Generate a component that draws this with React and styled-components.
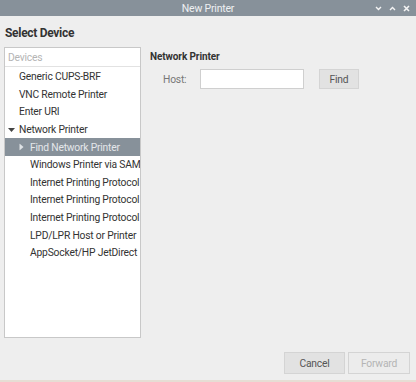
import React from "react";
import styled, { createGlobalStyle } from "styled-components";

const Global = createGlobalStyle`
  html, body { margin: 0; padding: 0; }
  body { background: #eeeeee; font-family: Roboto, "Liberation Sans", sans-serif; }
`;

const Window = styled.div`
  width: 416px;
  height: 382px;
  display: flex;
  flex-direction: column;
  background: #eeeeee;
  box-sizing: border-box;
  border-bottom: 2px solid #e6ddd4;
`;

const TitleBar = styled.div`
  height: 16px;
  background: #87919a;
  display: flex;
  align-items: center;
  justify-content: center;
  position: relative;
  color: #eef0f2;
  font-size: 10.5px;
  letter-spacing: -0.2px;
  flex-shrink: 0;
`;

const Controls = styled.div`
  position: absolute;
  right: 6px;
  top: 0;
  height: 16px;
  display: flex;
  align-items: center;
  gap: 7px;
`;

const Heading = styled.div`
  font-weight: bold;
  font-size: 12px;
  letter-spacing: -0.3px;
  color: #333;
  padding: 10px 0 0 5px;
  height: 21px;
`;

const Body = styled.div`
  display: flex;
  flex: 1;
  padding: 0 0 0 4px;
`;

const List = styled.div`
  width: 137px;
  height: 291px;
  box-sizing: border-box;
  border: 1px solid #c8c8c8;
  background: #fff;
  display: flex;
  flex-direction: column;
  overflow: hidden;
`;

const ListHeader = styled.div`
  height: 18px;
  border-bottom: 1px solid #e2e2e2;
  color: #b4b4b4;
  font-size: 10.3px;
  letter-spacing: -0.2px;
  display: flex;
  align-items: center;
  padding-left: 3px;
  margin-bottom: 1px;
`;

const Row = styled.div`
  height: 17.6px;
  display: flex;
  align-items: center;
  font-size: 10.3px;
  letter-spacing: -0.2px;
  white-space: nowrap;
  color: ${(p) => (p.$selected ? "#e4e7ea" : "#333")};
  background: ${(p) => (p.$selected ? "#87919a" : "transparent")};
  padding-left: ${(p) => 14 + p.$level * 11}px;
  position: relative;
`;

const Arrow = styled.span`
  position: absolute;
  left: ${(p) => 3 + p.$level * 11}px;
  top: 50%;
  transform: translateY(-50%);
  display: flex;
`;

const Right = styled.div`
  flex: 1;
  padding: 2px 0 0 9px;
  display: flex;
  flex-direction: column;
`;

const SubHeading = styled.div`
  font-weight: bold;
  font-size: 10px;
  letter-spacing: -0.1px;
  color: #333;
  height: 20px;
  display: flex;
  align-items: flex-start;
  padding-top: 2px;
  box-sizing: border-box;
`;

const HostRow = styled.div`
  display: flex;
  align-items: center;
  padding-left: 13px;
`;

const Label = styled.span`
  font-size: 10.3px;
  letter-spacing: -0.2px;
  color: #777;
  width: 37px;
`;

const Input = styled.div`
  width: 104px;
  height: 20px;
  box-sizing: border-box;
  border: 1px solid #cfcfcf;
  background: #fff;
  margin-right: 15px;
`;

const Button = styled.div`
  height: ${(p) => p.$h || 20}px;
  width: ${(p) => p.$w}px;
  box-sizing: border-box;
  border: 1px solid #d4d4d4;
  background: ${(p) => (p.$disabled ? "#ececec" : "#e2e2e2")};
  color: ${(p) => (p.$disabled ? "#b4b4b4" : "#555")};
  font-size: 10.3px;
  letter-spacing: -0.2px;
  display: flex;
  align-items: center;
  justify-content: center;
`;

const Footer = styled.div`
  display: flex;
  justify-content: flex-end;
  gap: 3px;
  padding: 0 6px 6px 0;
  flex-shrink: 0;
`;

const Down = ({ color }) => (
  <svg width="7" height="5" viewBox="0 0 7 5"><path d="M0 0.5 L7 0.5 L3.5 4.5 Z" fill={color} /></svg>
);
const RightTri = ({ color }) => (
  <svg width="5" height="7" viewBox="0 0 5 7"><path d="M0.5 0 L4.5 3.5 L0.5 7 Z" fill={color} /></svg>
);

const items = [
  { label: "Generic CUPS-BRF", level: 0 },
  { label: "VNC Remote Printer", level: 0 },
  { label: "Enter URI", level: 0 },
  { label: "Network Printer", level: 0, arrow: "down" },
  { label: "Find Network Printer", level: 1, arrow: "right", selected: true },
  { label: "Windows Printer via SAMBA", level: 1 },
  { label: "Internet Printing Protocol (ipp)", level: 1 },
  { label: "Internet Printing Protocol (https)", level: 1 },
  { label: "Internet Printing Protocol (http)", level: 1 },
  { label: "LPD/LPR Host or Printer", level: 1 },
  { label: "AppSocket/HP JetDirect", level: 1 },
];

export default function App() {
  return (
    <>
      <Global />
      <Window>
        <TitleBar>
          New Printer
          <Controls>
            <svg width="7" height="5" viewBox="0 0 7 5"><path d="M1 1 L3.5 3.5 L6 1" stroke="#f4f4f4" strokeWidth="1.4" fill="none" /></svg>
            <svg width="7" height="5" viewBox="0 0 7 5"><path d="M1 4 L3.5 1.5 L6 4" stroke="#f4f4f4" strokeWidth="1.4" fill="none" /></svg>
            <svg width="7" height="7" viewBox="0 0 7 7"><path d="M1 1 L6 6 M6 1 L1 6" stroke="#f4f4f4" strokeWidth="1.6" fill="none" /></svg>
          </Controls>
        </TitleBar>
        <Heading>Select Device</Heading>
        <Body>
          <List>
            <ListHeader>Devices</ListHeader>
            {items.map((it) => (
              <Row key={it.label} $level={it.level} $selected={it.selected}>
                {it.arrow && (
                  <Arrow $level={it.level}>
                    {it.arrow === "down" ? <Down color="#444" /> : <RightTri color="#dfe3e6" />}
                  </Arrow>
                )}
                {it.label}
              </Row>
            ))}
          </List>
          <Right>
            <SubHeading>Network Printer</SubHeading>
            <HostRow>
              <Label>Host:</Label>
              <Input />
              <Button $w={40}>Find</Button>
            </HostRow>
          </Right>
        </Body>
        <Footer>
          <Button $w={61} $h={22}>Cancel</Button>
          <Button $w={62} $h={22} $disabled>Forward</Button>
        </Footer>
      </Window>
    </>
  );
}
